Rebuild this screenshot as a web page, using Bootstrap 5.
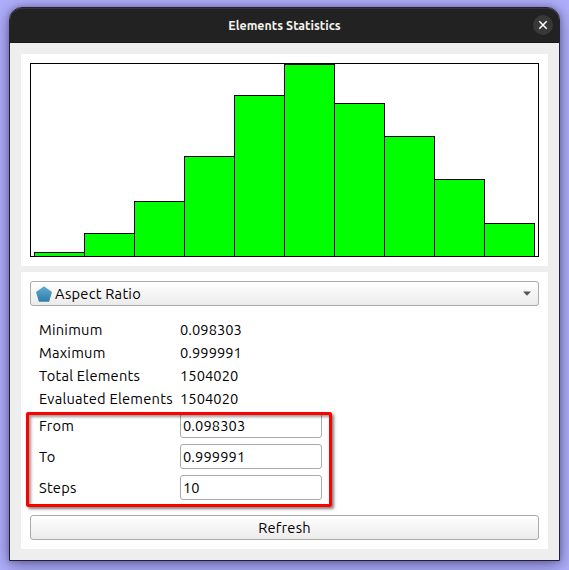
<!DOCTYPE html>
<html lang="en">
<head>
<meta charset="utf-8">
<meta name="viewport" content="width=device-width, initial-scale=1">
<title>Elements Statistics</title>
<link href="https://cdn.jsdelivr.net/npm/bootstrap@5.3.0/dist/css/bootstrap.min.css" rel="stylesheet">
<style>
body{background:#aeaefa;font:14.67px/23px Ubuntu,"Noto Sans",sans-serif;letter-spacing:.23px;color:#000;height:570px}
.dialog-window{margin:7px 9px 9px;width:551px;height:554px;border:1px solid #241f31;border-radius:13px 13px 0 0;background:#eee;box-shadow:0 3px 16px rgba(20,15,60,.5),0 0 5px rgba(20,15,60,.22)}
.title-bar{height:35px;background:#222;border-bottom:1px solid #181818;border-radius:12px 12px 0 0;box-shadow:inset 0 1px #343434;color:#f4f2ee;font-weight:700;font-size:12.4px;letter-spacing:.04px}
.close-btn{right:6px;top:7px;width:20px;height:20px;background:#383838}
.dialog-content{padding:11px}
.pane{padding:9px;background:#fff}
.plot-pane{height:212px;margin-bottom:6px}
.plot{height:194px;border:1px solid #000;padding-left:3px}
.plot-bar{width:51px;background:#0f0;border:1px solid #000;border-bottom:0}
.plot-bar+.plot-bar{margin-left:-1px}
.form-pane{height:277px}
.control{height:25px;border:1px solid #aaa;border-radius:3px;color:#000;font-size:inherit;line-height:23px;letter-spacing:inherit;background:linear-gradient(#fff,#ebebeb)}
.combo{padding:0 7px 0 5px}
.combo-text{margin-left:3px}
.info-grid{display:grid;grid-template-columns:141px 1fr;padding:12px 0 0 9px}
.info-value{letter-spacing:.06px}
.edit-grid{display:grid;grid-template-columns:141px 142px;row-gap:6px;padding:3px 0 0 9px;line-height:25px}
.edit-grid input{width:142px;background:#fff;padding:0 2px;outline:0;letter-spacing:.1px}
.highlight{left:-4px;top:2px;width:306px;height:95px;border:3px solid #f00;border-radius:2px;box-shadow:2px 2px 3px rgba(0,0,0,.5),inset 2px 2px 3px rgba(0,0,0,.4);pointer-events:none}
.refresh{margin-top:15px}
</style>
</head>
<body class="overflow-hidden d-flex">
<main class="dialog-window">
  <header class="title-bar position-relative d-flex align-items-center justify-content-center">
    <span>Elements Statistics</span>
    <button class="close-btn btn rounded-circle border-0 p-0 position-absolute d-flex" aria-label="Close">
      <svg width="20" height="20" viewBox="0 0 20 20" fill="none" stroke="#fff" stroke-width="1.5"><path d="M6.3 6.3l7.4 7.4M13.7 6.3l-7.4 7.4"/></svg>
    </button>
  </header>
  <div class="dialog-content">
    <section class="pane plot-pane">
      <div class="plot d-flex align-items-end">
        <div class="plot-bar" style="height:4px"></div>
        <div class="plot-bar" style="height:23px"></div>
        <div class="plot-bar" style="height:55px"></div>
        <div class="plot-bar" style="height:100px"></div>
        <div class="plot-bar" style="height:161px"></div>
        <div class="plot-bar" style="height:192px"></div>
        <div class="plot-bar" style="height:153px"></div>
        <div class="plot-bar" style="height:120px"></div>
        <div class="plot-bar" style="height:77px"></div>
        <div class="plot-bar" style="height:33px"></div>
      </div>
    </section>
    <section class="pane form-pane">
      <button class="control combo btn w-100 d-flex align-items-center">
        <svg width="16" height="16" viewBox="0 0 16 16"><defs><linearGradient id="pent" x2="0" y2="1"><stop stop-color="#62acd5"/><stop offset="1" stop-color="#2c7da6"/></linearGradient></defs><path d="M8 .2l8 5.9-2.9 9.7H2.9L0 6.1z" fill="url(#pent)"/></svg>
        <span class="combo-text me-auto">Aspect Ratio</span>
        <svg width="8" height="5" viewBox="0 0 8 5"><path d="M0 .5h8L4 4.8z" fill="#555"/></svg>
      </button>
      <div class="info-grid">
        <span>Minimum</span><span class="info-value">0.098303</span>
        <span>Maximum</span><span class="info-value">0.999991</span>
        <span>Total Elements</span><span class="info-value">1504020</span>
        <span>Evaluated Elements</span><span class="info-value">1504020</span>
      </div>
      <div class="position-relative">
        <div class="edit-grid">
          <label for="from">From</label><input id="from" class="control" value="0.098303">
          <label for="to">To</label><input id="to" class="control" value="0.999991">
          <label for="steps">Steps</label><input id="steps" class="control" value="10">
        </div>
        <div class="highlight position-absolute"></div>
      </div>
      <button class="control refresh btn w-100 p-0">Refresh</button>
    </section>
  </div>
</main>
<script src="https://cdn.jsdelivr.net/npm/bootstrap@5.3.0/dist/js/bootstrap.bundle.min.js"></script>
</body>
</html>
